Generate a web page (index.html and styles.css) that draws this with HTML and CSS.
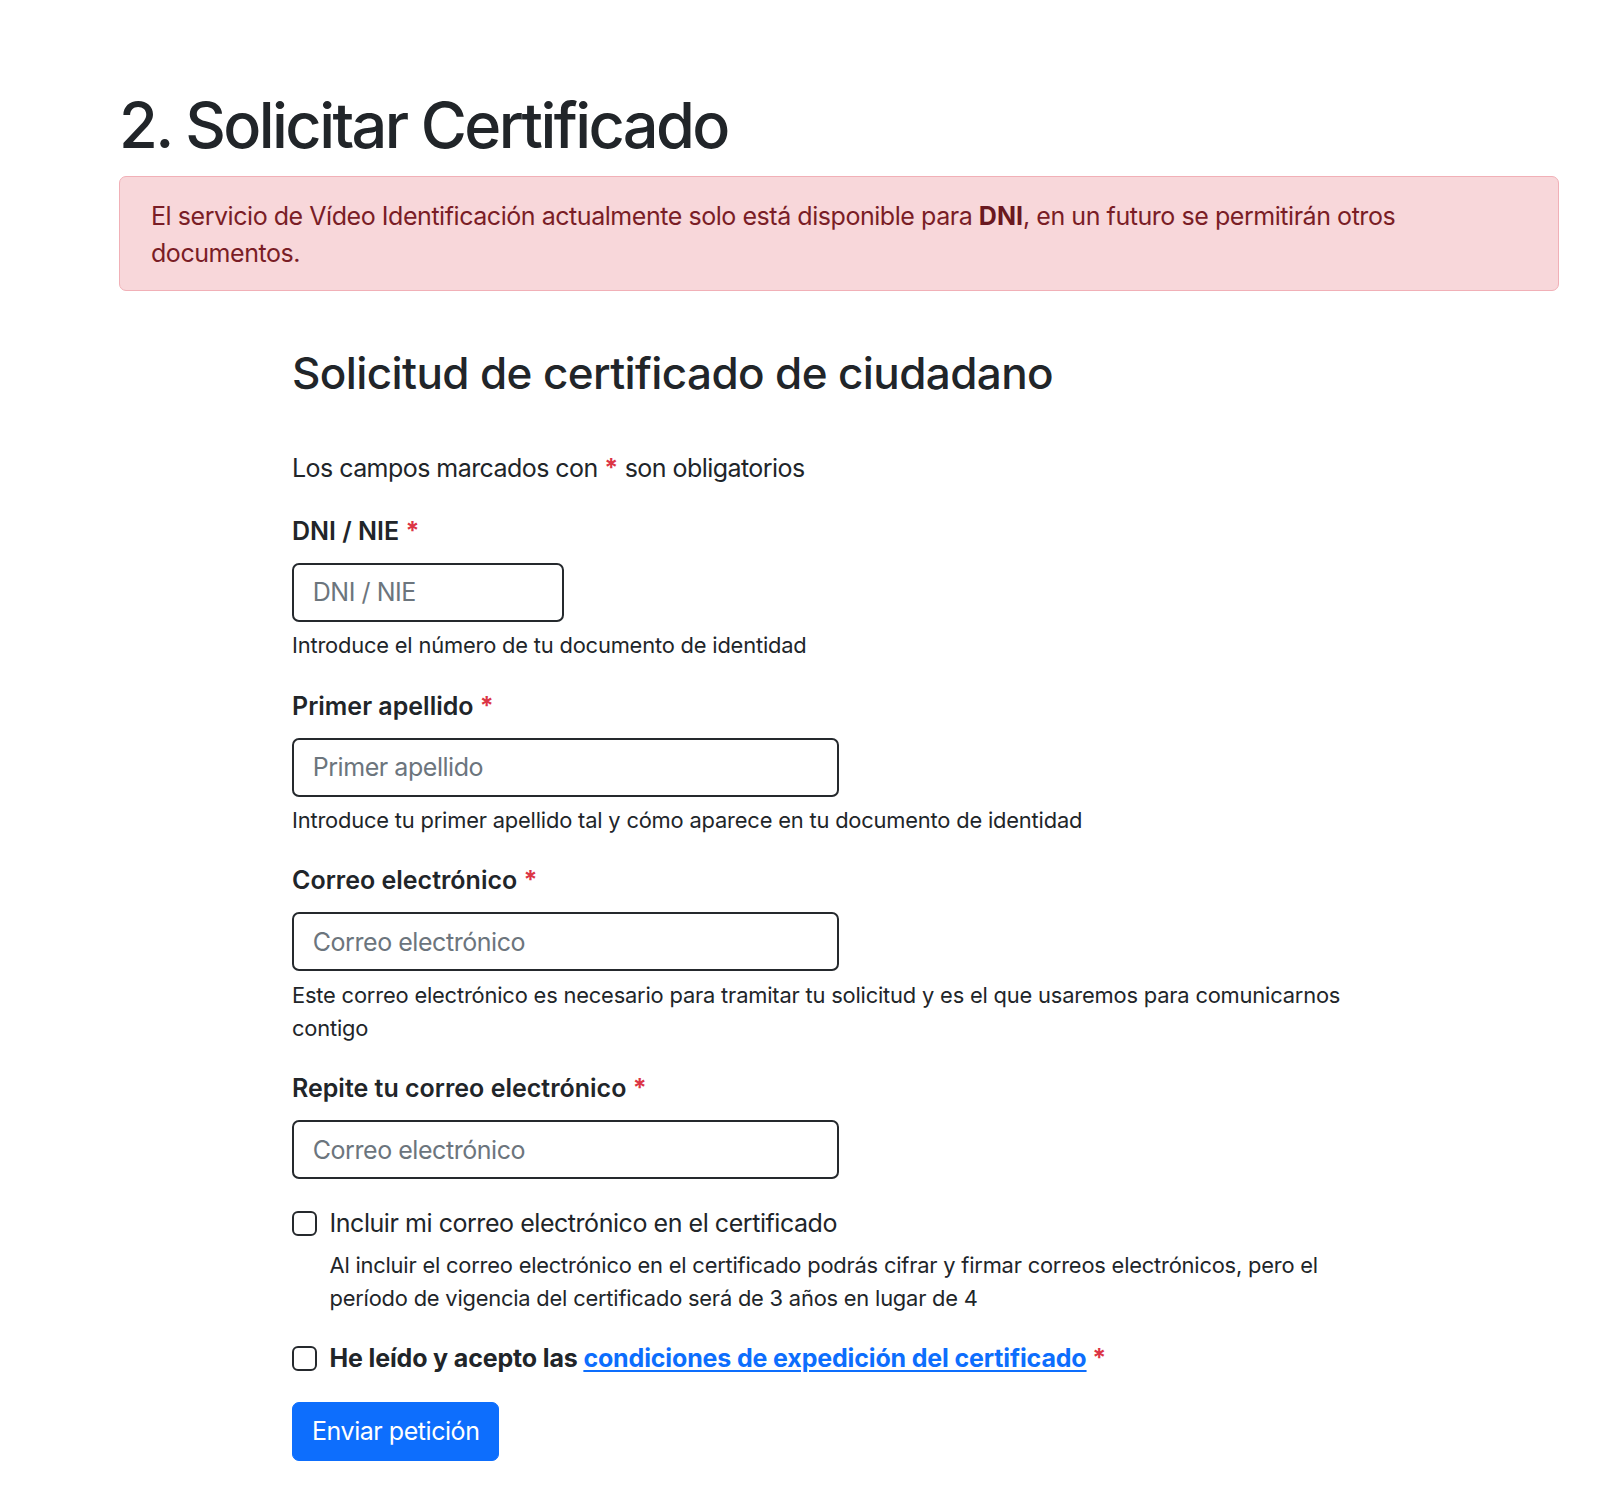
FILE: index.html
```html
<!DOCTYPE html>
<html lang="es">
<head>
<meta charset="utf-8">
<title>Solicitar Certificado</title>
<link rel="stylesheet" href="styles.css">
</head>
<body>
<main class="container">
  <h1 class="title">2. Solicitar Certificado</h1>
  <div class="alert">El servicio de Vídeo Identificación actualmente solo está disponible para <strong>DNI</strong>, en un futuro se permitirán otros documentos.</div>

  <section class="form-col">
    <h2 class="subtitle">Solicitud de certificado de ciudadano</h2>
    <p class="required-note">Los campos marcados con <span class="req">*</span> son obligatorios</p>

    <div class="field">
      <label class="label" for="dni">DNI / NIE <span class="req">*</span></label>
      <input class="control control-short" id="dni" type="text" placeholder="DNI / NIE">
      <div class="help">Introduce el número de tu documento de identidad</div>
    </div>

    <div class="field">
      <label class="label" for="ap">Primer apellido <span class="req">*</span></label>
      <input class="control" id="ap" type="text" placeholder="Primer apellido">
      <div class="help">Introduce tu primer apellido tal y cómo aparece en tu documento de identidad</div>
    </div>

    <div class="field">
      <label class="label" for="mail">Correo electrónico <span class="req">*</span></label>
      <input class="control" id="mail" type="email" placeholder="Correo electrónico">
      <div class="help">Este correo electrónico es necesario para tramitar tu solicitud y es el que usaremos para comunicarnos contigo</div>
    </div>

    <div class="field field-last">
      <label class="label" for="mail2">Repite tu correo electrónico <span class="req">*</span></label>
      <input class="control" id="mail2" type="email" placeholder="Correo electrónico">
    </div>

    <div class="check">
      <input class="check-input" type="checkbox" id="inc">
      <div class="check-body">
        <label class="check-label" for="inc">Incluir mi correo electrónico en el certificado</label>
        <div class="check-help">Al incluir el correo electrónico en el certificado podrás cifrar y firmar correos electrónicos, pero el período de vigencia del certificado será de 3 años en lugar de 4</div>
      </div>
    </div>

    <div class="check">
      <input class="check-input" type="checkbox" id="acc">
      <div class="check-body">
        <label class="check-label bold" for="acc">He leído y acepto las <a href="#" class="link">condiciones de expedición del certificado</a> <span class="req">*</span></label>
      </div>
    </div>

    <button class="btn" type="button">Enviar petición</button>
  </section>
</main>
</body>
</html>
```

FILE: styles.css
```css
* { box-sizing: border-box; }

html, body {
  margin: 0;
  padding: 0;
  background: #fff;
}

body {
  font-family: Inter, "Noto Sans", "Liberation Sans", sans-serif;
  font-size: 25px;
  line-height: 1.5;
  color: #212529;
  letter-spacing: -0.45px;
}

.container {
  width: 1440px;
  margin-left: 119px;
  padding-top: 88px;
  padding-bottom: 30px;
}

.title {
  margin: 0 0 12px 0;
  font-size: 63px;
  font-weight: 500;
  line-height: 1.2;
  letter-spacing: -2.6px;
}

.alert {
  background: #f8d7da;
  border: 1px solid #f1b0b7;
  border-radius: 7px;
  color: #7a1d26;
  padding: 21px 31px 17px 31px;
  line-height: 37.5px;
}

.alert strong {
  font-weight: 700;
  color: #6a1820;
  letter-spacing: 0;
}

.form-col {
  margin-left: 173px;
  width: 1080px;
  padding-top: 56px;
}

.subtitle {
  margin: 0;
  font-size: 44px;
  font-weight: 500;
  line-height: 1.2;
  letter-spacing: -0.6px;
}

.required-note {
  margin: 51px 0 25px 0;
  letter-spacing: -0.55px;
}

.req {
  color: #dc3545;
  font-weight: 700;
  letter-spacing: 0;
}

.field {
  display: flex;
  flex-direction: column;
  align-items: flex-start;
  margin-bottom: 25.5px;
}

.field-last {
  margin-bottom: 26px;
}

.label {
  font-weight: 600;
  margin-bottom: 12.5px;
  line-height: 37.5px;
  letter-spacing: 0;
}

.control {
  width: 547px;
  height: 59px;
  padding: 9px 18.75px;
  font-family: inherit;
  font-size: 25px;
  line-height: 37.5px;
  letter-spacing: -0.45px;
  color: #212529;
  background: #fff;
  border: 2px solid #25292d;
  border-radius: 7px;
  outline: none;
}

.control-short {
  width: 272px;
}

.control::placeholder {
  color: #6c757d;
}

.help {
  margin-top: 7.5px;
  font-size: 21.875px;
  line-height: 32.8px;
  letter-spacing: -0.18px;
}

.check {
  display: flex;
  align-items: flex-start;
  margin-bottom: 25px;
}

.check-input {
  appearance: none;
  -webkit-appearance: none;
  flex: 0 0 auto;
  width: 25px;
  height: 25px;
  margin: 6.25px 12.5px 0 0;
  border: 2px solid #25292d;
  border-radius: 6px;
  background: #fff;
}

.check-label {
  display: block;
  line-height: 37.5px;
}

.check-label.bold {
  font-weight: 700;
  letter-spacing: -0.15px;
}

.check-help {
  margin-top: 6px;
  font-size: 21.875px;
  line-height: 33px;
  letter-spacing: -0.2px;
}

.link {
  color: #0d6efd;
  text-decoration: underline;
  text-underline-offset: 3px;
}

.btn {
  display: inline-block;
  font-family: inherit;
  font-size: 25px;
  line-height: 37.5px;
  letter-spacing: -0.45px;
  padding: 9.5px 19px;
  color: #fff;
  background: #0d6efd;
  border: 1px solid #0d6efd;
  border-radius: 7px;
  cursor: pointer;
}
```
